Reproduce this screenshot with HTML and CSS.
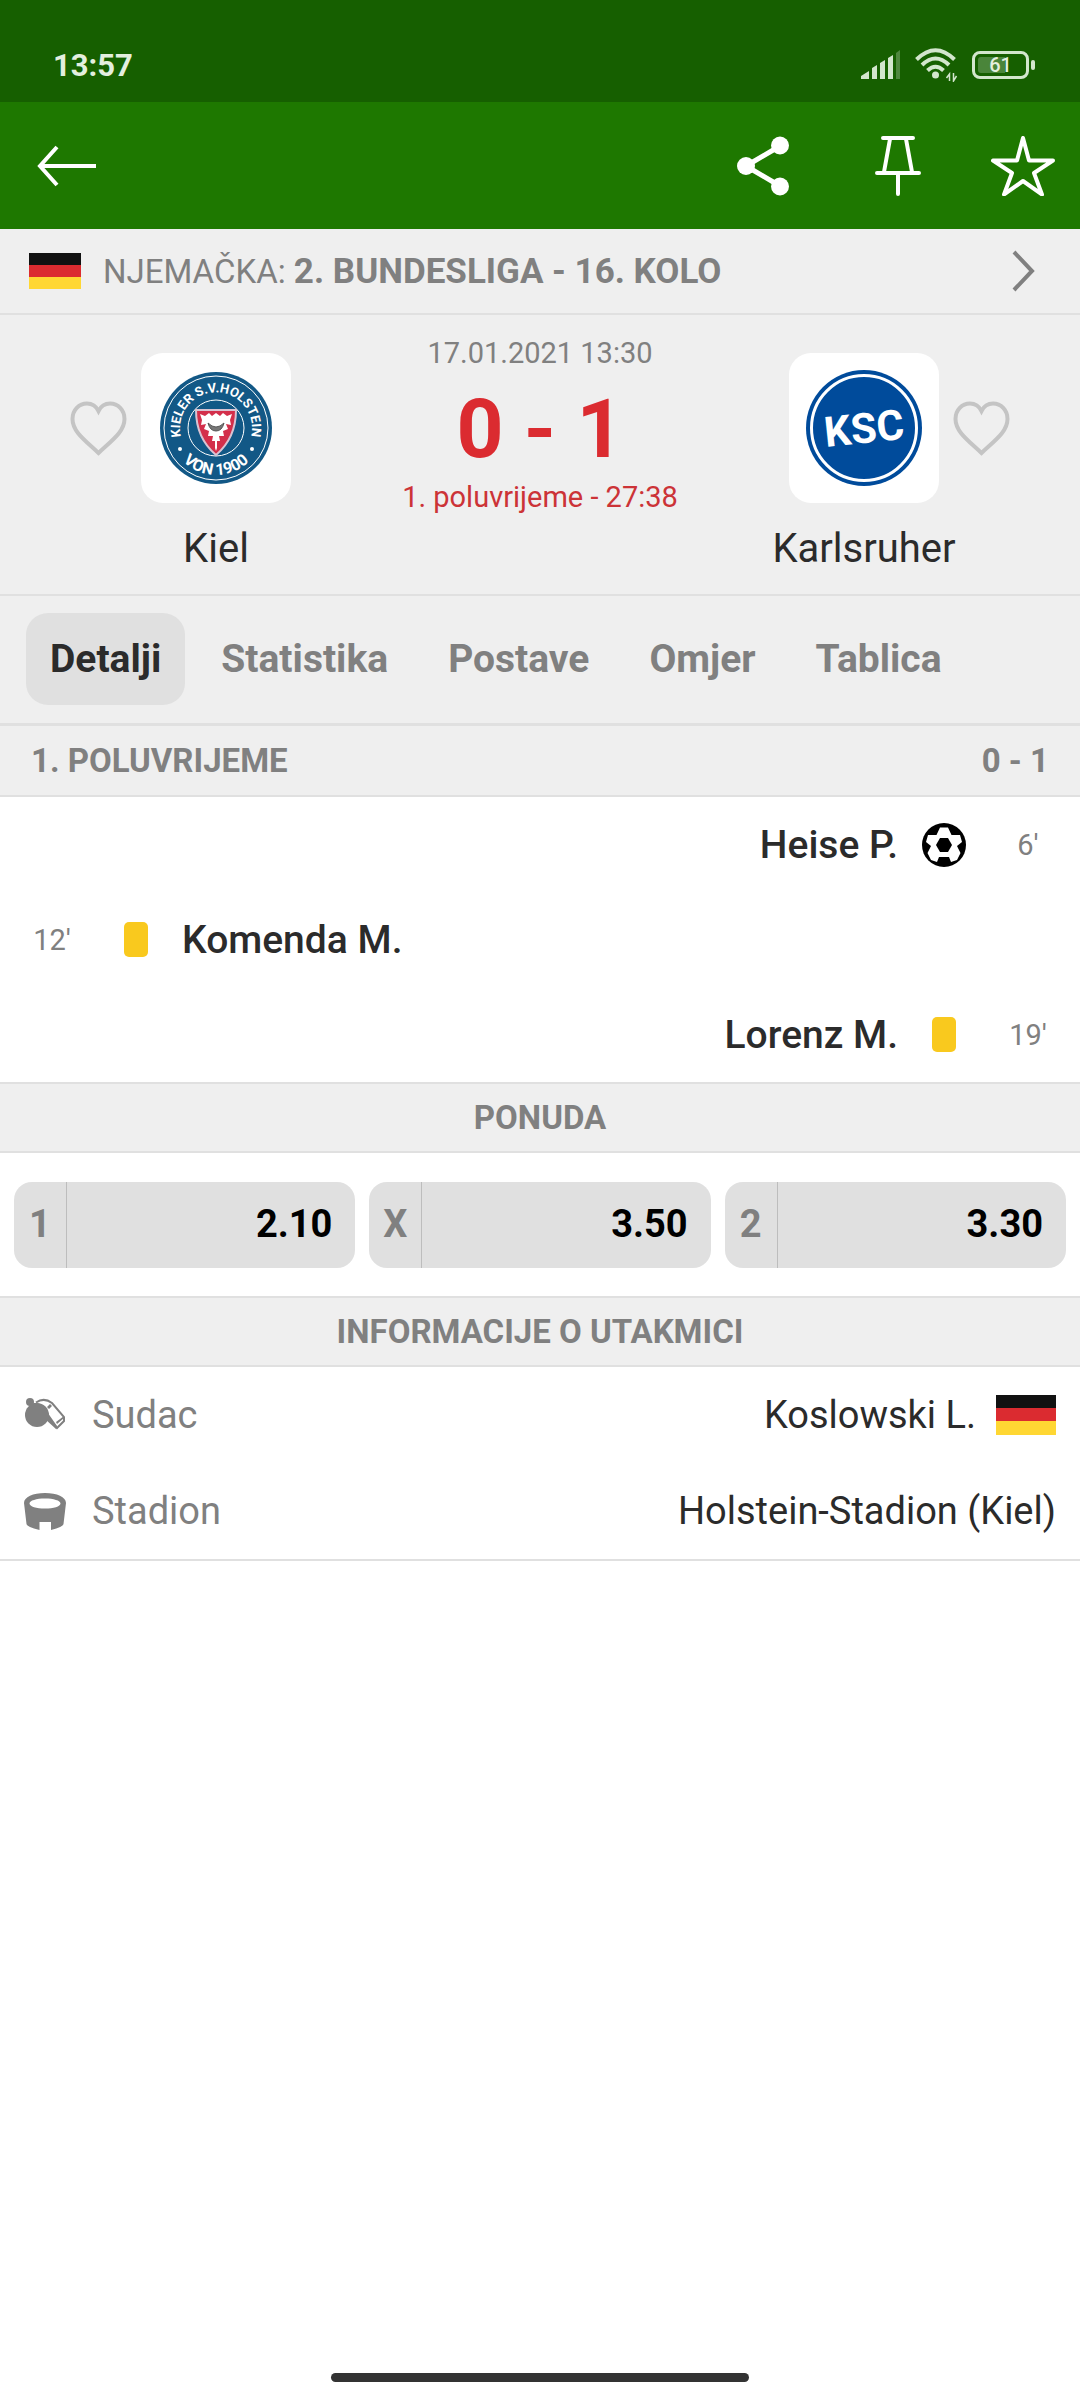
FILE: index.html
```html
<!DOCTYPE html>
<html lang="hr">
<head>
<meta charset="utf-8">
<meta name="viewport" content="width=device-width, initial-scale=1.0">
<title>Kiel - Karlsruher</title>
<link rel="stylesheet" href="styles.css">
</head>
<body>
<div class="statusbar">
  <span class="clock">13:57</span>
  <div class="indicators">
    <svg width="40" height="30" viewBox="0 0 40 30" fill="#d3e6cd">
      <path d="M0 29v-3l8-5v8zM11 29V18l5-3v14zM19 29V13l5-3v19zM27 29V8l5-3v24z"/>
      <path d="M35 29V3l4-3v29z" opacity=".3"/>
    </svg>
    <svg width="43" height="34" viewBox="0 0 43 34" fill="none" stroke="#d3e6cd" stroke-width="4">
      <path d="M1.500 11.500Q20.500-7 39.500 11.500M7 17Q20.500 4 34 17M12.500 22.500Q20.500 15 28.500 22.500"/>
      <circle cx="20.500" cy="27" r="3.500" fill="#d3e6cd" stroke="none"/>
      <path d="M34.500 33v-7l-3 4M38.500 25v8l3-5" stroke-width="1.500"/>
    </svg>
    <span class="battery"><span class="level">61</span></span>
  </div>
</div>

<header class="appbar">
  <button class="icon-btn" aria-label="Natrag">
    <svg width="60" height="42" viewBox="0 0 60 42" fill="none" stroke="#fff" stroke-width="4">
      <path d="M20 2L3 21l17 19M3 21h56"/>
    </svg>
  </button>
  <div class="actions">
    <button class="icon-btn" aria-label="Podijeli">
      <svg width="52" height="60" viewBox="0 0 52 60" fill="#fff">
        <path d="M9 30L43 10M9 30l34 20" stroke="#fff" stroke-width="5"/>
        <circle cx="9" cy="30" r="9"/><circle cx="43" cy="9.500" r="9"/><circle cx="43" cy="50.500" r="9"/>
      </svg>
    </button>
    <button class="icon-btn" aria-label="Prikvači">
      <svg width="46" height="60" viewBox="0 0 46 60" fill="none" stroke="#fff" stroke-width="4" stroke-linecap="round">
        <path d="M8 2h30M2 37h42M23 37v21M15 3L9 36M31 3l6 33"/>
      </svg>
    </button>
    <button class="icon-btn" aria-label="Favorit">
      <svg width="64" height="60" viewBox="0 0 64 60" fill="none" stroke="#fff" stroke-width="4" stroke-linejoin="round">
        <path d="M32 2l6 22.500h24L43 37l8 21.500L32 45 13 58.500 21 37 2 24.500h24z"/>
      </svg>
    </button>
  </div>
</header>

<a class="league" href="#liga">
  <span class="flag"></span>
  <span class="league-name">NJEMAČKA: <b>2. BUNDESLIGA - 16. KOLO</b></span>
  <svg width="24" height="42" viewBox="0 0 24 42" fill="none" stroke="#808080" stroke-width="4">
    <path d="M2 2l18 19L2 40"/>
  </svg>
</a>

<section class="match">
  <div class="team home">
    <button class="icon-btn heart" aria-label="Prati Kiel">
      <svg width="57" height="55" viewBox="0 0 57 55" fill="none" stroke="#c4c4c4" stroke-width="4">
        <path d="M28.500 52C16 40 2.500 31 2.500 18 2.500 9 9 2.500 17 2.500c5 0 9 2.500 11.500 7.500C31 5 35 2.500 40 2.500c8 0 14.500 6.500 14.500 15.500 0 13-13.500 22-26 34z"/>
      </svg>
    </button>
    <div class="crest">
      <svg width="150" height="150" viewBox="0 0 150 150">
        <defs>
          <path id="ring-top" d="M44.340 94.130A36 36 0 1 1 105.660 94.130"/>
          <path id="ring-bottom" d="M28 75A47 47 0 0 0 122 75"/>
        </defs>
        <circle cx="75" cy="75" r="56" fill="#125886"/>
        <circle cx="75" cy="75" r="52" fill="none" stroke="#fff" stroke-width="1"/>
        <circle cx="75" cy="75" r="28" fill="none" stroke="#fff" stroke-width="1"/>
        <text class="kiel-top"><textPath href="#ring-top" startOffset="50%">KIELER S.V.HOLSTEIN</textPath></text>
        <text class="kiel-bottom"><textPath href="#ring-bottom" startOffset="50%">VON 1900</textPath></text>
        <circle cx="39" cy="96" r="2" fill="#fff"/>
        <circle cx="111" cy="96" r="2" fill="#fff"/>
        <path d="M55 57h40q0 28-20 45-20-17-20-45z" fill="#d32f4b" stroke="#d9c3d2" stroke-width="2"/>
        <path d="M59 61l5 2 4-3 3 3 4-3 4 3 3-3 4 3 5-2-2 6 1 5-5-1 2 5-5 2 1 5-5 0 1 5-3 0 0 7-1 3-1-3v-7l-3 0 1-5-5 0 1-5-5-2 2-5-5 1 1-5z" fill="#fff"/>
        <path d="M67 70q8 8 16 0-2 8-8 8t-8-8z" fill="#777" stroke="#555" stroke-width="1"/>
      </svg>
    </div>
    <h2 class="team-name">Kiel</h2>
  </div>

  <div class="result">
    <time class="kickoff">17.01.2021 13:30</time>
    <strong class="score">0 - 1</strong>
    <span class="period">1. poluvrijeme - 27:38</span>
  </div>

  <div class="team away">
    <div class="crest">
      <svg width="150" height="150" viewBox="0 0 150 150">
        <circle cx="75" cy="75" r="58" fill="#004b9b"/>
        <circle cx="75" cy="75" r="52.500" fill="none" stroke="#fff" stroke-width="3"/>
        <text class="ksc" transform="rotate(-6 75 75)" x="75" y="90">KSC</text>
      </svg>
    </div>
    <button class="icon-btn heart" aria-label="Prati Karlsruher">
      <svg width="57" height="55" viewBox="0 0 57 55" fill="none" stroke="#c4c4c4" stroke-width="4">
        <path d="M28.500 52C16 40 2.500 31 2.500 18 2.500 9 9 2.500 17 2.500c5 0 9 2.500 11.500 7.500C31 5 35 2.500 40 2.500c8 0 14.500 6.500 14.500 15.500 0 13-13.500 22-26 34z"/>
      </svg>
    </button>
    <h2 class="team-name">Karlsruher</h2>
  </div>
</section>

<nav class="tabs">
  <a class="tab active" href="#detalji">Detalji</a>
  <a class="tab" href="#statistika">Statistika</a>
  <a class="tab" href="#postave">Postave</a>
  <a class="tab" href="#omjer">Omjer</a>
  <a class="tab" href="#tablica">Tablica</a>
</nav>

<main>
  <h3 class="heading period-heading"><span>1. POLUVRIJEME</span><span>0 - 1</span></h3>
  <ul class="events">
    <li class="event event-away">
      <span class="minute">6'</span>
      <span class="event-icon">
        <svg width="44" height="44" viewBox="0 0 44 44">
          <circle cx="22" cy="22" r="22"/>
          <path fill="#fff" d="M18 4.500h8l3.500 7.500h8.500l2 7-5 4 3.500 7-3.500 7-6 2-2-5H17l-2 5-6-2-3.500-7L9 23l-5-4 2-7h8.500z"/>
          <path d="M18 15h8l4 7-4 7h-8l-4-7z"/>
        </svg>
      </span>
      <span class="player">Heise P.</span>
    </li>
    <li class="event">
      <span class="minute">12'</span>
      <span class="event-icon"><span class="yellow-card"></span></span>
      <span class="player">Komenda M.</span>
    </li>
    <li class="event event-away">
      <span class="minute">19'</span>
      <span class="event-icon"><span class="yellow-card"></span></span>
      <span class="player">Lorenz M.</span>
    </li>
  </ul>

  <h3 class="heading">PONUDA</h3>
  <div class="odds">
    <button class="odd"><span class="odd-type">1</span><span class="odd-value">2.10</span></button>
    <button class="odd"><span class="odd-type">X</span><span class="odd-value">3.50</span></button>
    <button class="odd"><span class="odd-type">2</span><span class="odd-value">3.30</span></button>
  </div>

  <h3 class="heading">INFORMACIJE O UTAKMICI</h3>
  <dl class="info">
    <div class="info-row">
      <svg width="42" height="34" viewBox="0 0 42 34" fill="#808080">
        <circle cx="13" cy="17" r="12"/>
        <circle cx="6" cy="4" r="4"/>
        <path d="M5 6q8-3 14 2l14 20-1 3L21 21 9 14z"/>
        <path d="M12 4.500Q20-1 28 5l12 14v4l-7 7L17 12" fill="none" stroke="#808080" stroke-width="2"/>
        <path d="M23 9l3-3 2 2-3 3zM32 24l8-6v2l-7 6z"/>
      </svg>
      <dt>Sudac</dt>
      <dd>Koslowski L.<span class="flag flag-lg"></span></dd>
    </div>
    <div class="info-row">
      <svg width="42" height="37" viewBox="0 0 42 37" fill="#808080" fill-rule="evenodd">
        <path d="M0 10C0 4 9 0 21 0s21 4 21 10l-2.500 21q-.500 3-12.500 6v-8H15.500v8Q3 34 2.500 31zM5.500 10.500c0 3 7 5 15.500 5s15.500-2 15.500-5-7-5-15.500-5-15.500 2-15.500 5z"/>
      </svg>
      <dt>Stadion</dt>
      <dd>Holstein-Stadion (Kiel)</dd>
    </div>
  </dl>
</main>

<div class="home-indicator"></div>
</body>
</html>
```

FILE: styles.css
```css
* {
  box-sizing: border-box;
}

body {
  margin: 0;
  min-height: 100vh;
  display: flex;
  flex-direction: column;
  background: #fff;
  color: #2b2b2b;
  font-family: Roboto, "Liberation Sans", sans-serif;
}

h2, h3, ul, dl, dd {
  margin: 0;
  padding: 0;
}

svg {
  display: block;
  flex: none;
}

a {
  color: inherit;
  text-decoration: none;
}

button {
  border: 0;
  padding: 0;
  background: none;
  color: inherit;
  font-family: inherit;
  cursor: pointer;
}

/* status bar */
.statusbar {
  height: 102px;
  padding: 28px 51px 0 53px;
  display: flex;
  align-items: center;
  justify-content: space-between;
  background: #165f00;
  color: #e3efdf;
}

.clock {
  font-size: 31px;
  font-weight: 700;
}

.indicators {
  display: flex;
  align-items: center;
  gap: 14px;
}

.battery {
  position: relative;
  width: 57px;
  height: 28px;
  padding: 3px;
  border: 3px solid #d3e6cd;
  border-radius: 8px;
}

.battery::after {
  content: "";
  position: absolute;
  right: -9px;
  top: 6px;
  width: 4px;
  height: 10px;
  border-radius: 2px;
  background: #d3e6cd;
}

.level {
  display: block;
  height: 16px;
  border-radius: 3px;
  background: linear-gradient(90deg, #4a853a 61%, transparent 61%);
  font-size: 20px;
  font-weight: 500;
  line-height: 16px;
  text-align: center;
}

/* app bar */
.appbar {
  height: 127px;
  padding: 0 25px 0 37px;
  display: flex;
  align-items: center;
  justify-content: space-between;
  background: #1e7800;
}

.actions {
  display: flex;
  align-items: center;
}

.actions .icon-btn + .icon-btn {
  margin-left: 70px;
}

.actions .icon-btn:first-child {
  margin-right: 16px;
}

/* league */
.league {
  height: 86px;
  padding: 0 44px 0 29px;
  display: flex;
  align-items: center;
  background: #efefef;
  border-bottom: 2px solid #e0e0e0;
  color: #808080;
  font-size: 33px;
}

.league b {
  font-size: 35px;
}

.league-name {
  flex: 1;
  margin-left: 22px;
}

.flag {
  display: inline-block;
  width: 52px;
  height: 36px;
  background: linear-gradient(#111 33%, #db2b30 33%, #db2b30 66%, #ffd733 66%);
}

.flag-lg {
  width: 60px;
  height: 40px;
}

/* match header */
.match {
  padding: 20px 70px 22px;
  display: flex;
  justify-content: space-between;
  background: #efefef;
  border-bottom: 2px solid #e0e0e0;
}

.team {
  display: grid;
  grid-template-columns: 57px 150px;
  column-gap: 14px;
  row-gap: 22px;
  align-items: center;
  align-content: start;
  padding-top: 18px;
}

.away {
  grid-template-columns: 150px 57px;
}

.crest {
  height: 150px;
  border-radius: 22px;
  background: #fff;
}

.team-name {
  justify-self: center;
  font-size: 40px;
  font-weight: 400;
  line-height: 47px;
  white-space: nowrap;
}

.home .team-name {
  grid-column: 2;
}

.result {
  display: flex;
  flex-direction: column;
  align-items: center;
  white-space: nowrap;
}

.kickoff {
  color: #808080;
  font-size: 29px;
  line-height: 36px;
}

.score {
  padding-top: 8px;
  color: #db2b30;
  font-size: 82px;
  line-height: 100px;
}

.period {
  color: #cc3337;
  font-size: 29px;
  line-height: 36px;
}

.kiel-top, .kiel-bottom, .ksc {
  fill: #fff;
  font-weight: 700;
  text-anchor: middle;
}

.kiel-top {
  font-size: 13px;
}

.kiel-bottom {
  font-size: 16px;
}

.ksc {
  font-size: 42px;
}

/* tabs */
.tabs {
  padding: 17px 26px 18px;
  display: flex;
  gap: 12px;
  background: #efefef;
  border-bottom: 3px solid #e0e0e0;
}

.tab {
  padding: 0 24px;
  border-radius: 22px;
  color: #808080;
  font-size: 39px;
  font-weight: 700;
  line-height: 92px;
}

.tab.active {
  background: #e0e0e0;
  color: #2b2b2b;
}

/* sections */
.heading {
  padding: 13px 31px;
  background: #efefef;
  border-top: 2px solid #e0e0e0;
  border-bottom: 2px solid #e0e0e0;
  color: #808080;
  font-size: 33px;
  font-weight: 700;
  line-height: 41px;
  text-align: center;
}

.period-heading {
  display: flex;
  justify-content: space-between;
  padding: 14px 31px;
  border-top: 0;
}

.events {
  list-style: none;
}

.event {
  height: 95px;
  display: flex;
  align-items: center;
}

.event-away {
  flex-direction: row-reverse;
}

.minute {
  width: 104px;
  color: #808080;
  font-size: 29px;
  text-align: center;
}

.event-icon {
  width: 64px;
  display: flex;
  justify-content: center;
}

.yellow-card {
  width: 24px;
  height: 35px;
  border-radius: 5px;
  background: #f9c91e;
}

.player {
  padding: 0 14px;
  font-size: 39px;
  font-weight: 500;
}

.odds {
  padding: 29px 14px 28px;
  display: grid;
  grid-template-columns: repeat(3, 1fr);
  gap: 14px;
}

.odd {
  height: 86px;
  display: flex;
  align-items: stretch;
  border-radius: 18px;
  background: #e0e0e0;
  font-size: 38px;
  font-weight: 700;
  line-height: 84px;
}

.odd-type {
  width: 53px;
  border-right: 1px solid #bdbdbd;
  color: #808080;
}

.odd-value {
  flex: 1;
  padding-right: 23px;
  color: #000;
  text-align: right;
}

.info {
  border-bottom: 2px solid #e0e0e0;
}

.info-row {
  height: 96px;
  padding: 0 24px;
  display: flex;
  align-items: center;
  font-size: 38px;
}

.info-row dt {
  margin-left: 26px;
  color: #808080;
}

.info-row dd {
  flex: 1;
  display: flex;
  align-items: center;
  justify-content: flex-end;
  gap: 20px;
}

.home-indicator {
  width: 418px;
  height: 9px;
  margin: auto auto 18px;
  border-radius: 5px;
  background: #333;
}
```
